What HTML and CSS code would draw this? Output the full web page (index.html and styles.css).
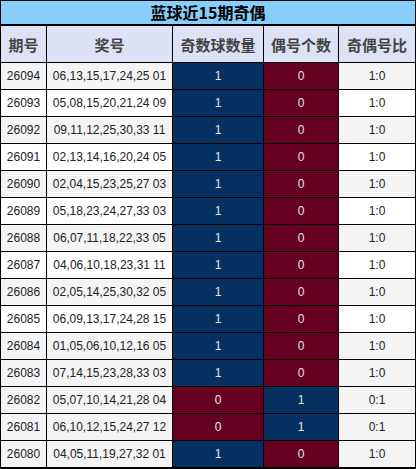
FILE: index.html
```html
<!DOCTYPE html>
<html lang="zh">
<head>
<meta charset="utf-8">
<title>蓝球近15期奇偶</title>
<link rel="stylesheet" href="styles.css">
</head>
<body>
<div class="board">
  <div class="title">蓝球近15期奇偶</div>
  <div class="grid">
    <div class="hd">期号</div><div class="hd">奖号</div><div class="hd">奇数球数量</div><div class="hd">偶号个数</div><div class="hd">奇偶号比</div>

    <div class="c g">26094</div><div class="c g">06,13,15,17,24,25 01</div><div class="c blue">1</div><div class="c red">0</div><div class="c g">1:0</div>
    <div class="c">26093</div><div class="c">05,08,15,20,21,24 09</div><div class="c blue">1</div><div class="c red">0</div><div class="c">1:0</div>
    <div class="c g">26092</div><div class="c g">09,11,12,25,30,33 11</div><div class="c blue">1</div><div class="c red">0</div><div class="c g">1:0</div>
    <div class="c">26091</div><div class="c">02,13,14,16,20,24 05</div><div class="c blue">1</div><div class="c red">0</div><div class="c">1:0</div>
    <div class="c g">26090</div><div class="c g">02,04,15,23,25,27 03</div><div class="c blue">1</div><div class="c red">0</div><div class="c g">1:0</div>
    <div class="c">26089</div><div class="c">05,18,23,24,27,33 03</div><div class="c blue">1</div><div class="c red">0</div><div class="c">1:0</div>
    <div class="c g">26088</div><div class="c g">06,07,11,18,22,33 05</div><div class="c blue">1</div><div class="c red">0</div><div class="c g">1:0</div>
    <div class="c">26087</div><div class="c">04,06,10,18,23,31 11</div><div class="c blue">1</div><div class="c red">0</div><div class="c">1:0</div>
    <div class="c g">26086</div><div class="c g">02,05,14,25,30,32 05</div><div class="c blue">1</div><div class="c red">0</div><div class="c g">1:0</div>
    <div class="c">26085</div><div class="c">06,09,13,17,24,28 15</div><div class="c blue">1</div><div class="c red">0</div><div class="c">1:0</div>
    <div class="c g">26084</div><div class="c g">01,05,06,10,12,16 05</div><div class="c blue">1</div><div class="c red">0</div><div class="c g">1:0</div>
    <div class="c g">26083</div><div class="c g">07,14,15,23,28,33 03</div><div class="c blue">1</div><div class="c red">0</div><div class="c g">1:0</div>
    <div class="c g">26082</div><div class="c g">05,07,10,14,21,28 04</div><div class="c red">0</div><div class="c blue">1</div><div class="c g">0:1</div>
    <div class="c g">26081</div><div class="c g">06,10,12,15,24,27 12</div><div class="c red">0</div><div class="c blue">1</div><div class="c g">0:1</div>
    <div class="c g">26080</div><div class="c g">04,05,11,19,27,32 01</div><div class="c blue">1</div><div class="c red">0</div><div class="c g">1:0</div>
  </div>
</div>
</body>
</html>
```

FILE: styles.css
```css
html, body {
  margin: 0;
  padding: 0;
  background: #ffffff;
}

.board {
  width: 416px;
  box-sizing: border-box;
  border: 1px solid #000;
  border-bottom-width: 2px;
  background: #000;
  font-family: "Liberation Sans", Arial, "Noto Sans CJK SC", sans-serif;
}

.title {
  height: 23px;
  border-bottom: 2px solid #000;
  background: #87cefa;
  color: #000;
  font-family: "Noto Sans CJK SC", sans-serif;
  font-weight: bold;
  font-size: 16px;
  line-height: 23px;
  text-align: center;
}

.grid {
  display: grid;
  grid-template-columns: 45px 125px 90px 74px 76px;
  grid-template-rows: 36px repeat(15, 26px);
  gap: 1px;
}

.hd {
  background: #dce2f3;
  color: #444;
  font-family: "Noto Sans CJK SC", sans-serif;
  font-weight: bold;
  font-size: 15px;
  display: flex;
  align-items: center;
  justify-content: center;
}

.c {
  background: #ffffff;
  color: #222;
  font-size: 12px;
  display: flex;
  align-items: center;
  justify-content: center;
}

.c.g {
  background: #f4f4f4;
}

.c.blue {
  background: #053060;
  color: #e6e6e6;
}

.c.red {
  background: #650020;
  color: #e6e6e6;
}
```
